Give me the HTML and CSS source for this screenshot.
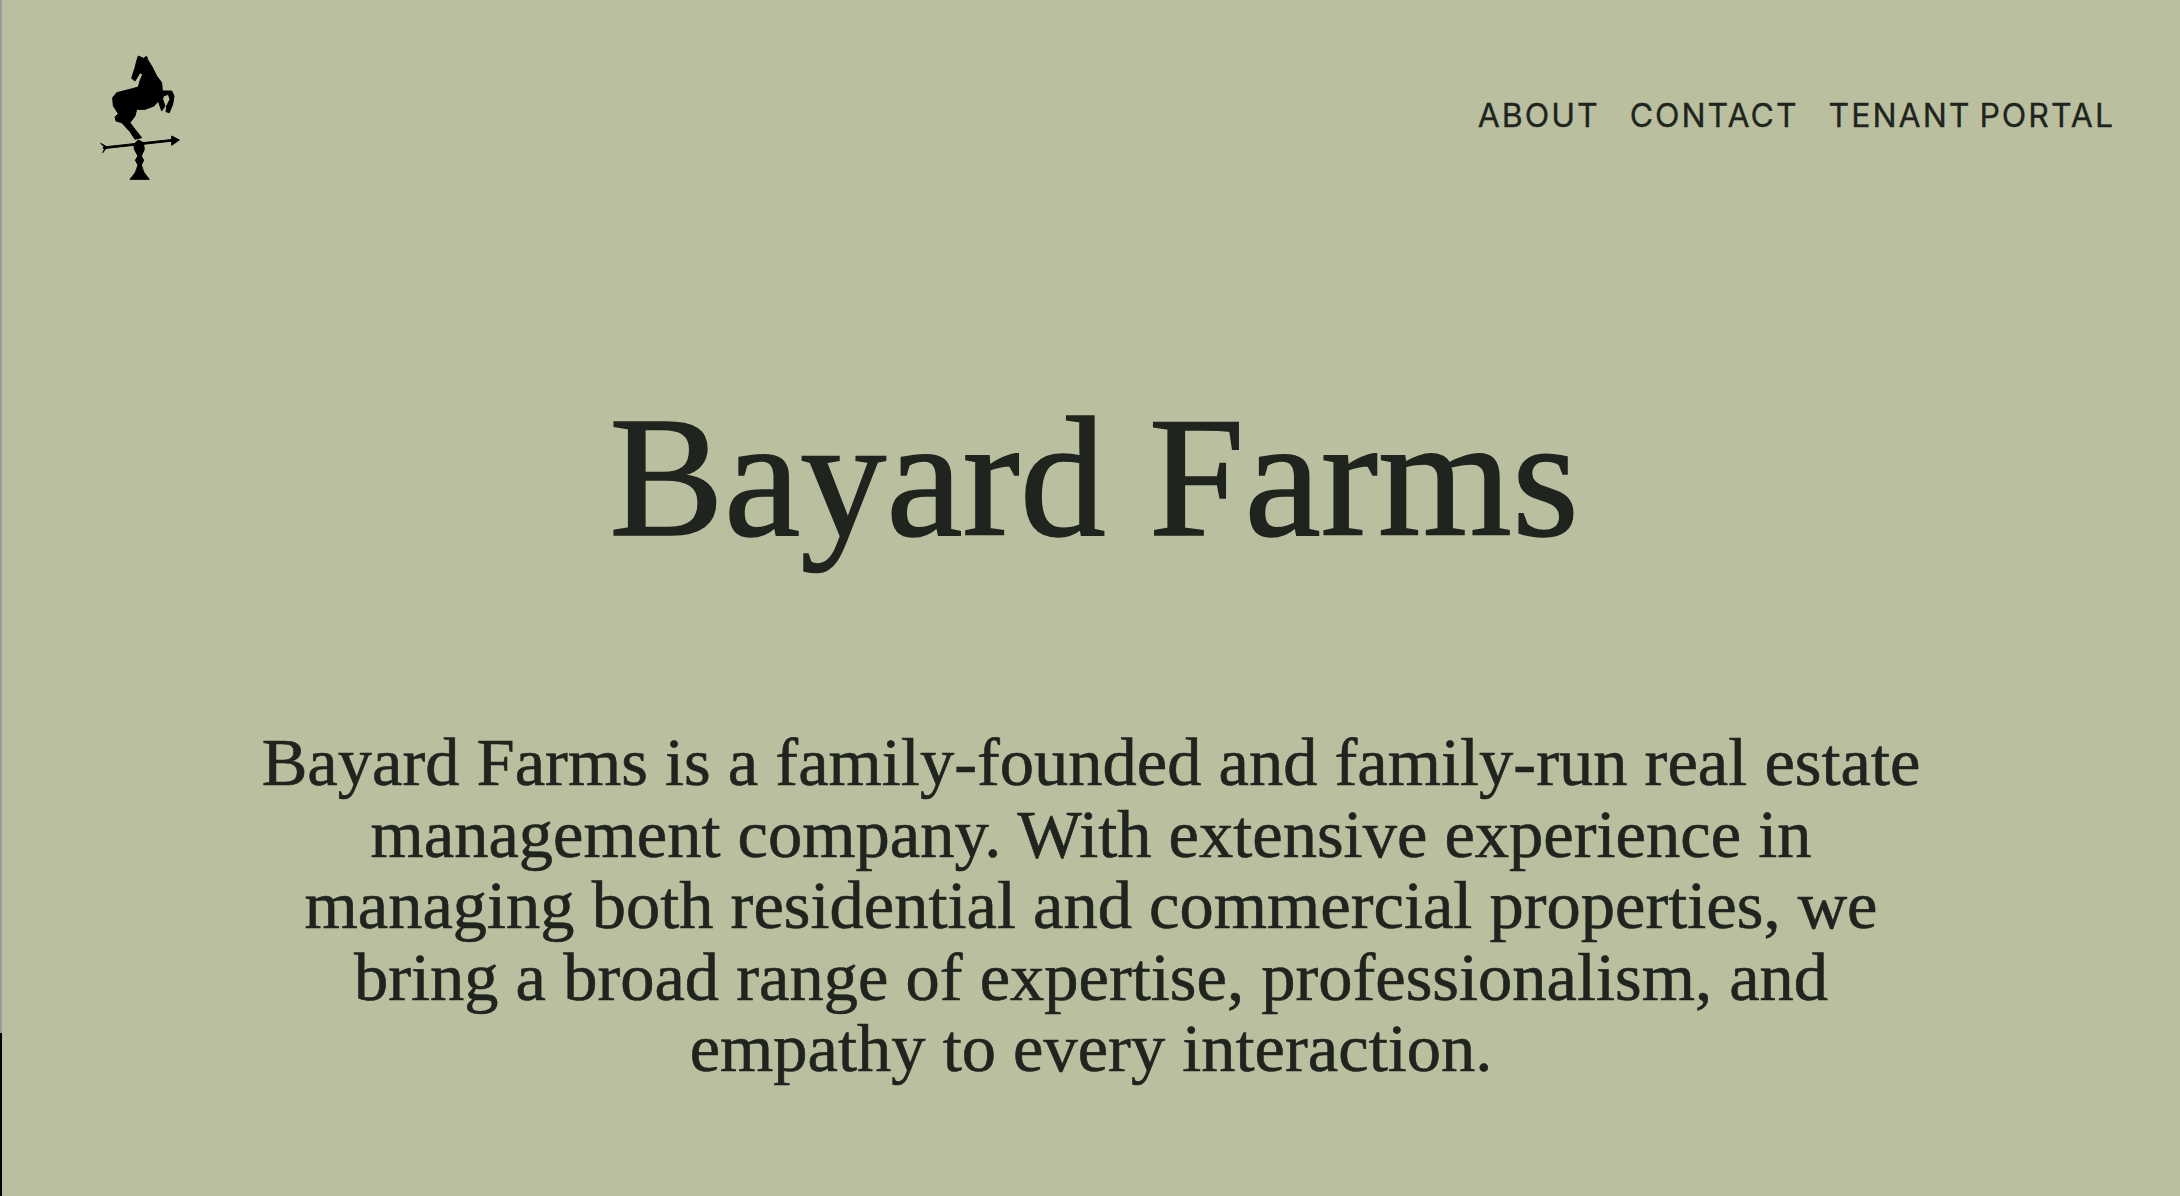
FILE: index.html
```html
<!DOCTYPE html>
<html lang="en">
<head>
    <meta charset="UTF-8">
    <meta name="viewport" content="width=device-width, initial-scale=1.0">
    <title>Bayard Farms</title>
    <link rel="stylesheet" href="styles.css">
</head>
<body>
    <div class="edge"></div>
    <div class="page">
        <header class="header">
            <a class="logo" href="#" aria-label="Bayard Farms">
                <svg class="vane" viewBox="54 36 246 390" aria-hidden="true">
                    <path d="M175 45L190 52L200 46L203 56L215 75L230 105L245 125L247 150L275 150L282 165L278 190L268 215L258 212L260 195L270 175L265 160L250 165L248 175L255 195L245 210L235 180L222 195L195 205L170 205L165 225L150 245L165 265L185 290L165 295L150 272L125 245L108 240L105 228L115 218L100 195L98 170L110 155L150 145L175 138L180 120L188 100L180 95L165 120L155 112L165 80L170 60Z"/>
                    <path d="M162 310L175 297L190 305L193 325L184 345L191 358L184 372Q188 395 208 415L150 415Q170 395 174 372L166 358L174 345L163 325Z"/>
                    <path d="M70 318L280 295L280 300L70 323Z"/>
                    <path d="M275 285L298 297L275 313Z"/>
                    <path d="M62 307L82 318L68 335L76 320Z"/>
                </svg>
            </a>
            <nav class="nav">
                <a href="#">ABOUT</a>
                <a href="#">CONTACT</a>
                <a href="#">TENANT PORTAL</a>
            </nav>
        </header>
        <main class="main">
            <h1 class="title">Bayard Farms</h1>
            <p class="intro">Bayard Farms is a family-founded and family-run real estate<br>management company. With extensive experience in<br>managing both residential and commercial properties, we<br>bring a broad range of expertise, professionalism, and<br>empathy to every interaction.</p>
        </main>
    </div>
</body>
</html>
```
FILE: styles.css
```css
html, body {
    height: 100%;
}
body {
    margin: 0;
    display: flex;
    height: 1196px;
    overflow: hidden;
    background: #babf9f;
    color: #20241e;
    font-family: "Liberation Serif", serif;
}
.edge {
    flex: none;
    width: 2px;
    height: 100%;
    background: linear-gradient(to bottom, #9a9c92 1033px, #000 1033px);
}
.page {
    flex: 1;
    display: flex;
    flex-direction: column;
}
.header {
    display: flex;
    justify-content: space-between;
    align-items: center;
    padding: 53px 65px 0 96px;
}
.logo {
    display: block;
    line-height: 0;
}
.vane {
    width: 82px;
    height: 130px;
    fill: #000;
    stroke: #000;
    stroke-width: 3;
    stroke-linejoin: round;
}
.nav {
    display: flex;
    gap: 30px;
    margin-bottom: 6px;
    font-family: Inter, sans-serif;
    font-size: 32px;
    letter-spacing: 2px;
    word-spacing: -3px;
    -webkit-text-stroke: 0.3px #20241e;
}
.nav a {
    color: #20241e;
    text-decoration: none;
}
.main {
    display: flex;
    flex-direction: column;
    align-items: center;
}
.title {
    margin: 194px 0 0;
    padding-left: 6px;
    font-size: 172px;
    font-weight: 400;
    line-height: 200px;
    -webkit-text-stroke: 1.5px #20241e;
}
.intro {
    margin: 150px 0 0;
    font-size: 68.5px;
    line-height: 71.5px;
    text-align: center;
    -webkit-text-stroke: 0.6px #20241e;
}
```
